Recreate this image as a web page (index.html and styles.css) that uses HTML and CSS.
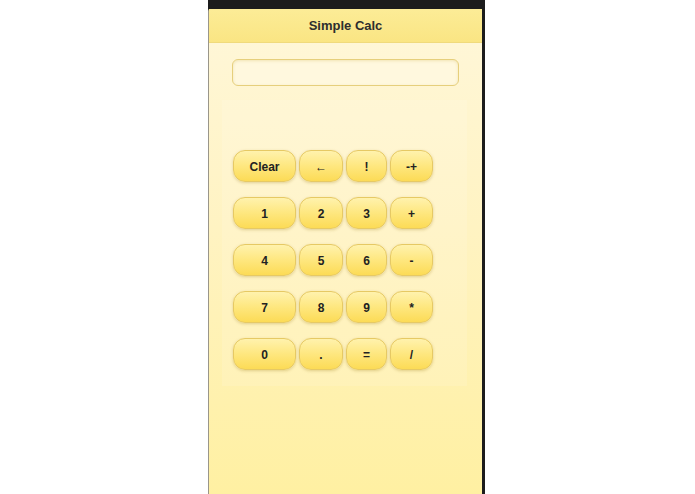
FILE: index.html
```html
<!DOCTYPE html>
<html>
<head>
<meta charset="utf-8">
<title>Simple Calc</title>
<link rel="stylesheet" href="styles.css">
</head>
<body>
<div class="device">
  <div class="screen">
    <div class="header">Simple Calc</div>
    <div class="content">
      <div class="display"></div>
      <div class="pad">
        <div class="keys">
          <button class="key">Clear</button>
          <button class="key">&larr;</button>
          <button class="key">!</button>
          <button class="key">-+</button>
          <button class="key">1</button>
          <button class="key">2</button>
          <button class="key">3</button>
          <button class="key">+</button>
          <button class="key">4</button>
          <button class="key">5</button>
          <button class="key">6</button>
          <button class="key">-</button>
          <button class="key">7</button>
          <button class="key">8</button>
          <button class="key">9</button>
          <button class="key">*</button>
          <button class="key">0</button>
          <button class="key">.</button>
          <button class="key">=</button>
          <button class="key">/</button>
        </div>
      </div>
    </div>
  </div>
</div>
</body>
</html>
```
FILE: styles.css
```css
html, body {
  margin: 0;
  padding: 0;
  background: #ffffff;
  font-family: "Liberation Sans", Arial, sans-serif;
}

.device {
  margin-left: 208px;
  width: 277px;
  height: 494px;
  box-sizing: border-box;
  padding-top: 9px;
  padding-right: 3px;
  background: #1c1c1c;
  display: flex;
  flex-direction: column;
}

.screen {
  flex: 1;
  display: flex;
  flex-direction: column;
  border-left: 1px solid #9a968a;
  border-top-left-radius: 2px;
  border-top-right-radius: 2px;
  background: linear-gradient(to bottom, #fff7da 0%, #fff3c2 45%, #fff0a2 100%);
}

.header {
  height: 32px;
  padding-top: 1px;
  line-height: 32px;
  text-align: center;
  font-size: 13px;
  font-weight: bold;
  color: #2e2e2e;
  background: linear-gradient(to bottom, #fcec97 0%, #fae583 100%);
  border-bottom: 1px solid #f0da7c;
}

.content {
  padding: 16px 23px 0 23px;
}

.display {
  height: 25px;
  border: 1px solid #e6cf7c;
  border-radius: 6px;
  background: #fff8de;
  box-shadow: inset 0 1px 3px rgba(200, 170, 60, 0.25);
}

.pad {
  margin: 14px -8px 0 -10px;
  padding: 50px 11px 16px 11px;
  background: rgba(255, 255, 255, 0.12);
}

.keys {
  display: grid;
  grid-template-columns: 63px 44px 41px 43px;
  grid-auto-rows: 32px;
  column-gap: 3px;
  row-gap: 15px;
}

.key {
  margin: 0;
  padding: 1px 0 0 0;
  border: 1px solid #e6c964;
  border-radius: 12px;
  background: linear-gradient(to bottom, #fff2ad 0%, #fee77f 50%, #fcdb56 100%);
  box-shadow: 0 1px 3px rgba(150, 120, 20, 0.3);
  font-family: "Liberation Sans", "DejaVu Sans", Arial, sans-serif;
  font-size: 12px;
  font-weight: bold;
  color: #222222;
}
```
